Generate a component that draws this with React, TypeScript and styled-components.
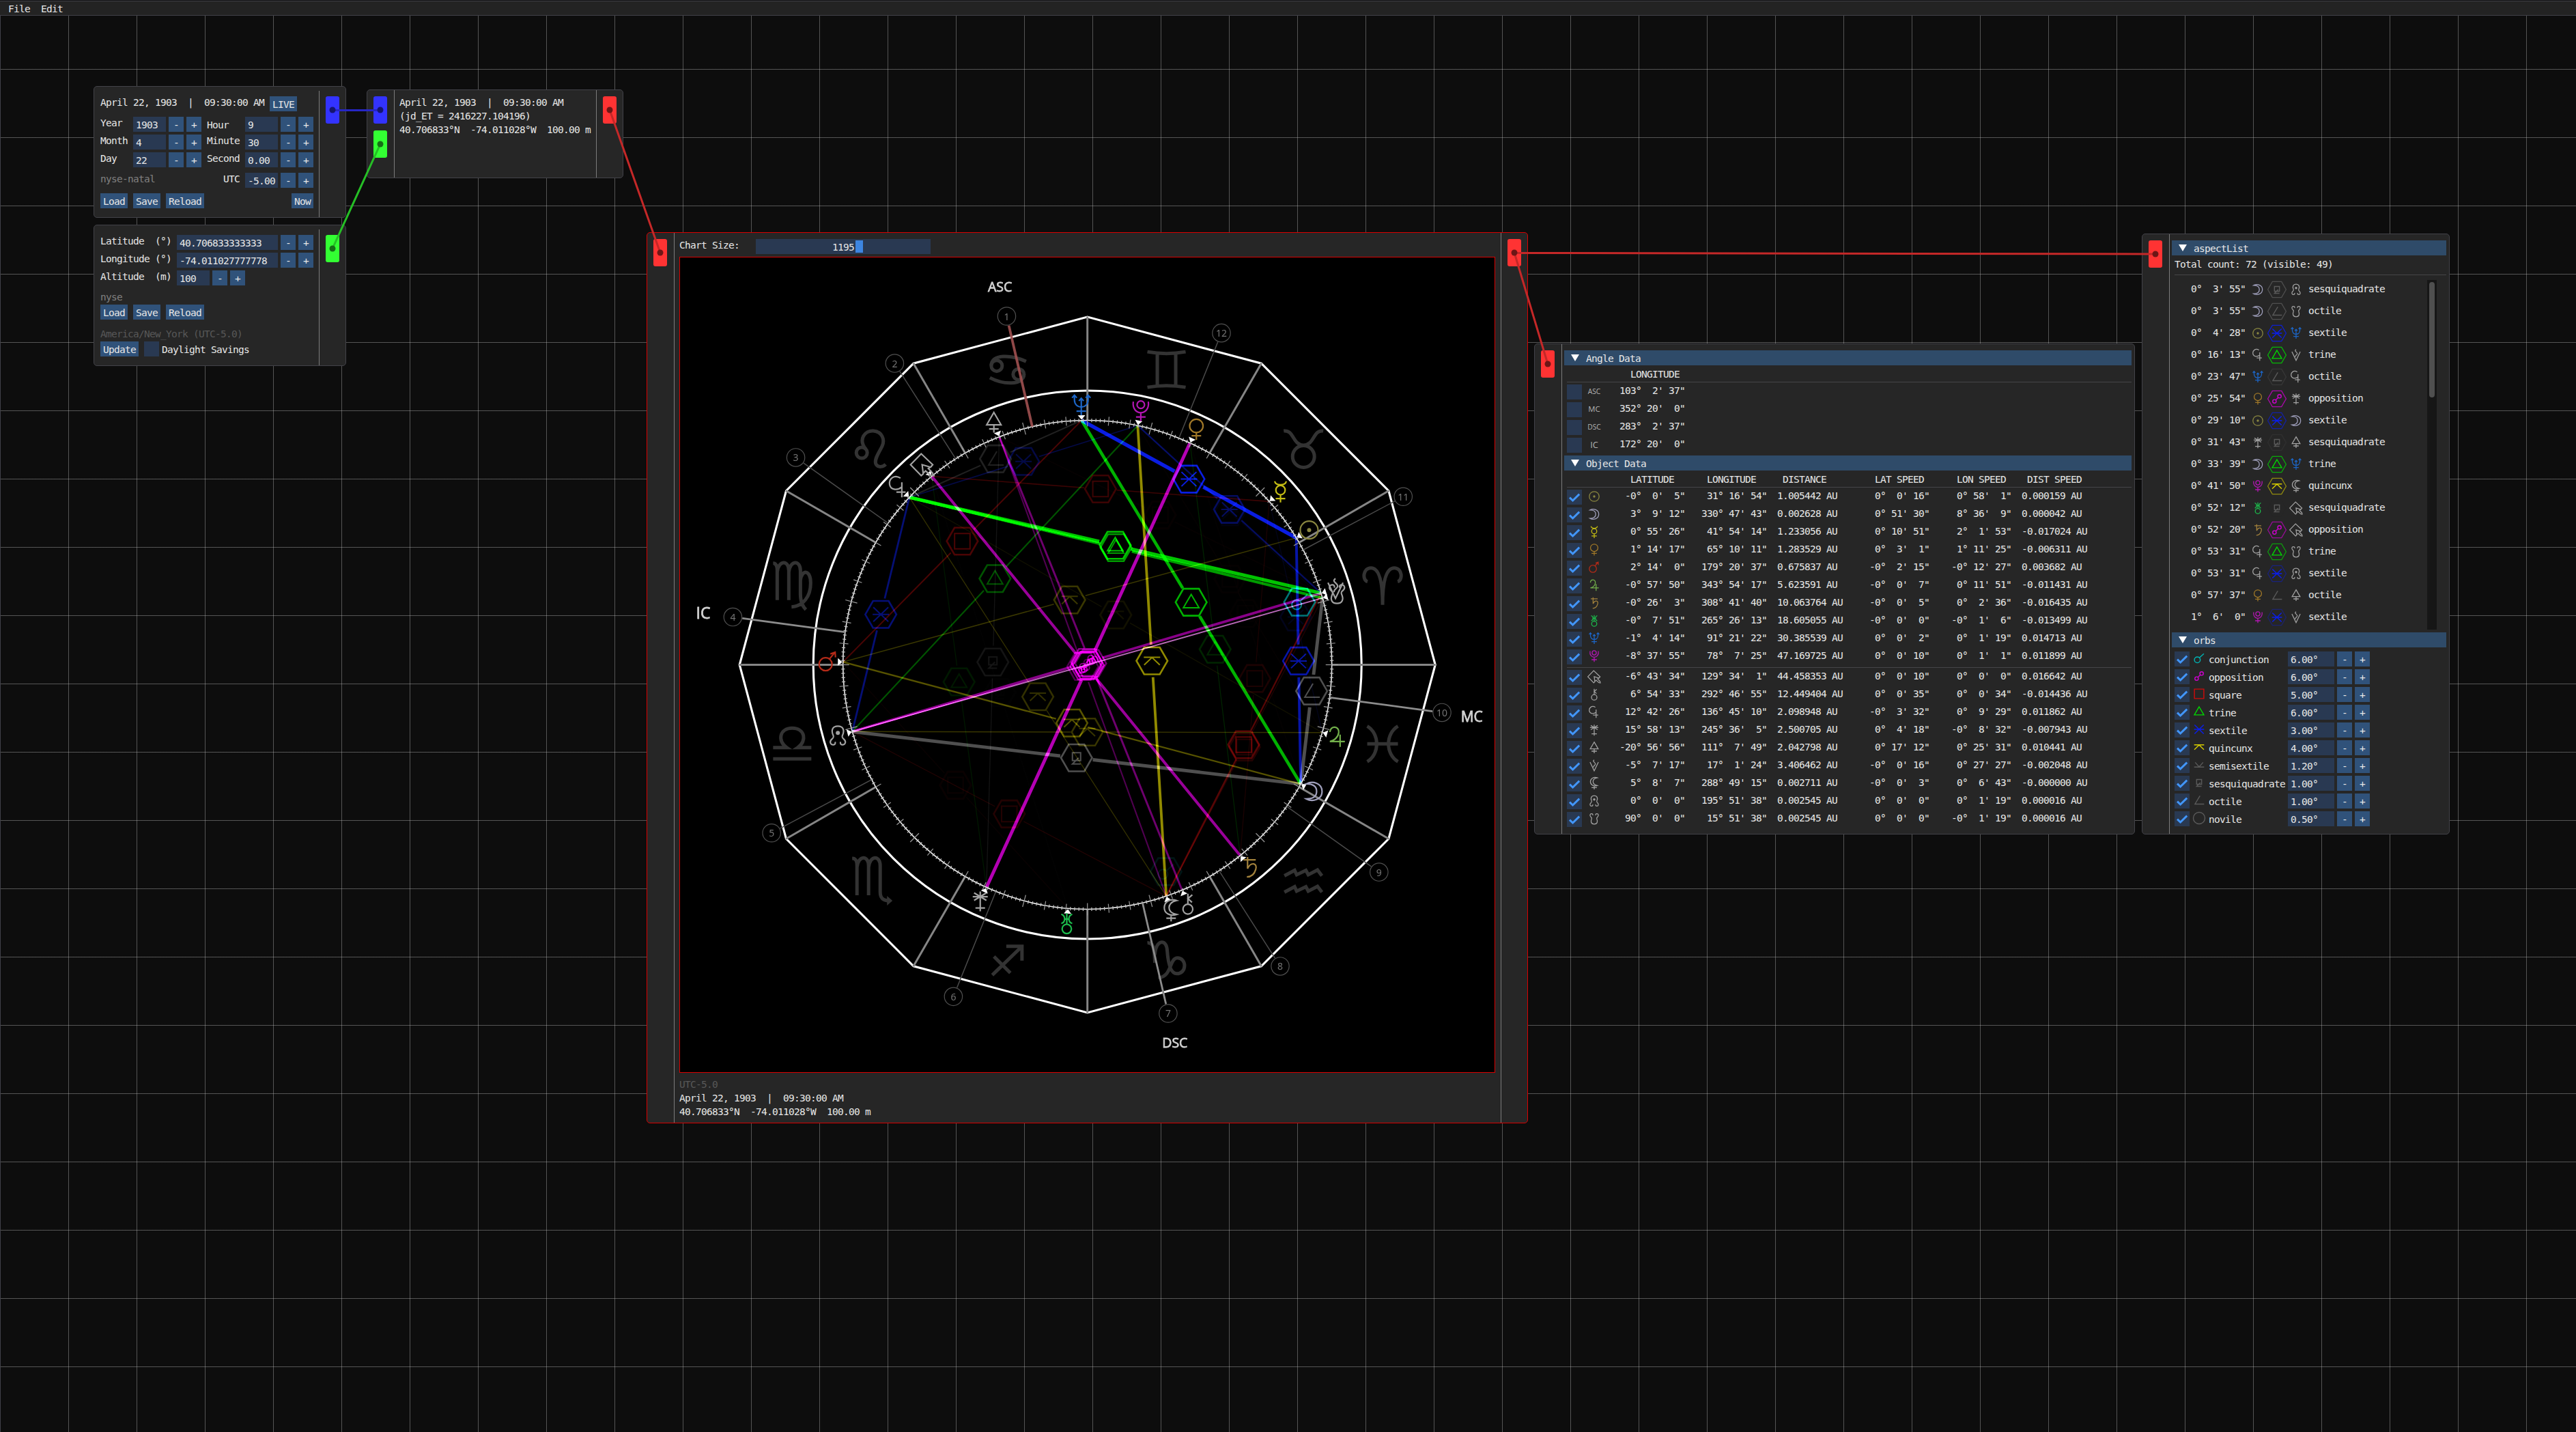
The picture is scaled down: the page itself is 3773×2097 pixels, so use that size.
import React from "react";
import styled, { createGlobalStyle } from "styled-components";

const GlobalStyle = createGlobalStyle`
  html, body { margin: 0; padding: 0; background: #0d0d0d; }
  * { box-sizing: border-box; }
`;

const MONO = '"DejaVu Sans Mono", "Liberation Mono", monospace';

/* ---------- window ---------- */

const Screen = styled.div`
  width: 3773px;
  height: 2097px;
  display: flex;
  flex-direction: column;
  padding-top: 1px;
  overflow: hidden;
  background: #0d0d0d;
  color: #e6e6e6;
  font-family: ${MONO};
  font-size: 14.5px;
  letter-spacing: -0.73px;
  line-height: 18px;
  white-space: pre;
`;

const MenuBar = styled.div`
  height: 22px;
  flex: none;
  display: flex;
  gap: 16px;
  padding: 2px 12px;
  background: #232323;
  border-top: 1px solid #404048;
  border-bottom: 1px solid #404048;
`;

const Canvas = styled.div`
  position: relative;
  flex: 1;
  margin-top: -22px;
  padding-top: 22px;
  border-left: 1px solid #404048;
  background-image:
    linear-gradient(to right, rgba(200, 200, 200, 0.38) 1px, transparent 1px),
    linear-gradient(to bottom, rgba(200, 200, 200, 0.38) 1px, transparent 1px);
  background-size: 100px 100px;
  background-origin: border-box;
  z-index: 0;
`;

const MenuLayer = styled.div`
  position: relative;
  z-index: 1;
`;

/* ---------- node frame ---------- */

const Node = styled.section<{ x: number; y: number; w: number; h: number; edge?: string }>`
  position: absolute;
  left: ${(p) => p.x - 1}px;
  top: ${(p) => p.y - 1}px;
  width: ${(p) => p.w}px;
  height: ${(p) => p.h}px;
  display: flex;
  background: #262626;
  border: 1px solid ${(p) => p.edge || "#424248"};
  border-radius: 5px;
`;

const PinColumn = styled.div<{ side: "in" | "out"; drop?: number }>`
  flex: none;
  width: 39px;
  display: flex;
  flex-direction: column;
  gap: 10px;
  margin-top: ${(p) => p.drop || 0}px;
  padding: ${(p) => (p.drop ? 14 - p.drop : 9)}px 0 0 9px;
  ${(p) => (p.side === "out" ? "border-left: 1px solid #7c7c7c;" : "")}
`;

const Pin = styled.span<{ c: string }>`
  width: 20px;
  height: 40px;
  border-radius: 3px;
  background: ${(p) => p.c};
`;

const Body = styled.div<{ pad: string; line?: boolean }>`
  flex: 1;
  min-width: 0;
  display: flex;
  flex-direction: column;
  gap: 4px;
  padding: ${(p) => p.pad};
  ${(p) => (p.line ? "border-left: 1px solid #7c7c7c;" : "")}
`;

/* ---------- widgets ---------- */

const Text = styled.span<{ c?: string; w?: number; down?: boolean; indent?: number }>`
  display: block;
  flex: none;
  height: 16px;
  ${(p) => (p.w ? `width: ${p.w}px;` : "")}
  ${(p) => (p.c ? `color: ${p.c};` : "")}
  ${(p) => (p.down ? "margin-top: 3px;" : "")}
  ${(p) => (p.indent ? `margin-left: ${p.indent}px;` : "")}
`;

const Row = styled.div<{ gap?: number; mt?: number }>`
  display: flex;
  flex: none;
  align-items: flex-start;
  gap: ${(p) => p.gap ?? 4}px;
  margin-top: ${(p) => p.mt || 0}px;
`;

const Button = styled.button<{ w?: number }>`
  all: unset;
  box-sizing: border-box;
  flex: none;
  height: 22px;
  padding: 3px 4px 1px;
  text-align: center;
  background: #30527a;
  ${(p) => (p.w ? `width: ${p.w}px;` : "")}
`;

const Field = styled.div<{ w: number }>`
  flex: none;
  height: 22px;
  width: ${(p) => p.w}px;
  padding: 3px 4px 1px;
  background: #293952;
`;

const Spacer = styled.span<{ w: number }>`
  flex: none;
  width: ${(p) => p.w}px;
`;

const CheckBox = styled.span`
  display: block;
  flex: none;
  width: 22px;
  height: 22px;
  background: #293952;
`;

function Check({ on }: { on?: boolean }) {
  return (
    <CheckBox>
      {on && (
        <svg width="22" height="22" display="block">
          <path d="M4 11.6 L8.6 16 L18.2 6.6" fill="none" stroke="#4296fa" strokeWidth="3" />
        </svg>
      )}
    </CheckBox>
  );
}

function Stepper({ value, w = 48 }: { value: string; w?: number }) {
  return (
    <Row>
      <Field w={w}>{value}</Field>
      <Button w={22}>-</Button>
      <Button w={22}>+</Button>
    </Row>
  );
}

const HeaderBar = styled.div`
  flex: none;
  height: 22px;
  display: flex;
  gap: 10px;
  padding: 3px 0 0 10px;
  background: #2f4b69;
`;

const Arrow = styled.i`
  width: 0;
  height: 0;
  margin-top: 3px;
  border: 6px solid transparent;
  border-top: 10px solid #fff;
  border-bottom: 0;
`;

const Rule = styled.hr<{ mt?: number }>`
  flex: none;
  width: auto;
  height: 1px;
  margin: ${(p) => p.mt || 0}px 0 -1px 4px;
  border: 0;
  background: #454548;
`;

function Header({ title }: { title: string }) {
  return (
    <HeaderBar>
      <Arrow />
      <Text>{title}</Text>
    </HeaderBar>
  );
}

/* ---------- astrological glyphs ---------- */

type Glyph = { c: string; d: string; dot?: [number, number, number]; rings?: [number, number, number][] };

const GREY = "#a2a2a2";
const GLYPHS: Record<string, Glyph> = {
  sun: { c: "#8a8740", d: "", dot: [0, 0, 3], rings: [[0, 0, 13]] },
  moon: { c: "#a0a0bd", d: "M-11 -11 C-2 -16 12 -12 12 0 C12 12 -2 16 -11 11 C2 11 4 5 4 0 C4 -5 2 -11 -11 -11Z" },
  mercury: { c: "#c4bc14", d: "M-8.5 -15 C-7 -8 7 -8 8.5 -15 M0 5 V16 M-7 10.5 H7", rings: [[0, -2, 6.8]] },
  venus: { c: "#a07828", d: "M0 5 V15.5 M-7 9.5 H7", rings: [[0, -5, 9.8]] },
  mars: { c: "#b42a18", d: "M2.5 -4.5 L9.5 -13 M3.5 -11.5 L10.5 -14 L11 -6.5", rings: [[-3.5, 3.5, 9.5]] },
  jupiter: { c: "#72b04a", d: "M-10 -7 C-9 -17 4 -16 3 -6 C2 1 -4 6 -10 7 H12 M5 -3 V15" },
  saturn: { c: "#a3823c", d: "M-9 -11 H9 M-3 -15 V2 C2 -9 12 -6 9 3 C7 10 2 14 -4 14" },
  uranus: { c: "#1cbc4c", d: "M-8 -13.5 C-1.5 -11 -1.5 -2 -8 0 M8 -13.5 C1.5 -11 1.5 -2 8 0 M0 -15 V1 M-3.5 -6.5 H3.5", rings: [[0, 8, 6.8]] },
  neptune: { c: "#1c66c8", d: "M-10 -14 V-8 C-10 6 10 6 10 -8 V-14 M0 -10 V14.5 M-7 8.5 H7 M-13.5 -11 L-10 -15 L-6.5 -11 M6.5 -11 L10 -15 L13.5 -11 M-3.5 -6.5 L0 -10.5 L3.5 -6.5" },
  pluto: { c: "#b416b4", d: "M-11 -13.5 C-14 8 14 8 11 -13.5 M0 2.5 V15 M-7 9 H7", rings: [[0, -9, 5.5]] },
  sedna: { c: GREY, d: "M2 13 L-1.4 16 L-17 0 L-1.4 -16 L15.5 0 L12 4 M0 0 L1.5 12.5 L5 9 L12.5 15.5 L16 16 L15.5 12.5 L9 5.5 L12 3.5 Z" },
  chiron: { c: GREY, d: "M0 -15 V0 M6.5 -13.5 L0 -8 L6 -2.5", rings: [[0, 7.5, 7.2]] },
  ceres: { c: GREY, d: "M3 -13 C-6 -19 -14 -12 -13 -4 C-12 4 -2 6 5 0 M5 -7 V15 M-3 7.5 H10.5" },
  juno: { c: GREY, d: "M0 -14 V15 M-11 -6.5 H11 M-9 -12 L9 -1 M-9 -1 L9 -12 M-7 10 H7" },
  pallas: { c: GREY, d: "M0 -15 L10.5 3 H-10.5 Z M0 3 V14.5 M-7 9 H7" },
  vesta: { c: GREY, d: "M-11 -9 L0 14 L11 -9 M0 -15 C-7 -10 5 -8 3 -3 C1 1 -3 1 -2 5" },
  lilith: { c: GREY, d: "M8 -14.5 C-2 -18 -10 -12 -10 -4 C-10 4 -2 9 8 6 C-1 4 -3 -1 -3 -4 C-3 -8 0 -13 8 -14.5 Z M0 8 V16 M-7 11.5 H7" },
  nnode: { c: GREY, d: "M-4 9 C-2 14 -10 15 -11 10 C-12 4 -4 5 -7 -1 C-10 -8 -8 -14 0 -14 C8 -14 10 -8 7 -1 C4 5 12 4 11 10 C10 15 2 14 4 9", dot: [0, -4, 3] },
  snode: { c: GREY, d: "M-4 -9 C-2 -14 -10 -15 -11 -10 C-12 -4 -4 -5 -7 1 C-10 8 -8 14 0 14 C8 14 10 8 7 1 C4 -5 12 -4 11 -10 C10 -15 2 -14 4 -9" },
};

const ASPECTS: Record<string, { angle: number; orb: number; c: string; d: string; rings?: [number, number, number][] }> = {
  conjunction: { angle: 0, orb: 6, c: "#00b4b4", d: "M0.6 -1.2 L11.4 -11", rings: [[-4.3, 3.8, 7]] },
  opposition: { angle: 180, orb: 6, c: "#d200d2", d: "M-3 3 L3 -3", rings: [[-6, 6, 4.2], [6, -6, 4.2]] },
  square: { angle: 90, orb: 5, c: "#d20a0a", d: "M-11.3 -11.3 H11.3 V11.3 H-11.3 Z" },
  trine: { angle: 120, orb: 6, c: "#00d800", d: "M0 -11.5 L11.4 8 H-11.4 Z" },
  sextile: { angle: 60, orb: 3, c: "#0a1eee", d: "M-12 0 H12 M-11 -10.5 L11 10.5 M-11 10.5 L11 -10.5" },
  quincunx: { angle: 150, orb: 4, c: "#d6cc00", d: "M-12 -5.3 H12 M-11.5 6 L0 -5 L11.5 6" },
  semisextile: { angle: 30, orb: 1.2, c: "#5a5a5a", d: "M-12 5.3 H12 M-9.5 -6 L0 5 L9.5 -6" },
  sesquiquadrate: { angle: 135, orb: 1, c: "#5a5a5a", d: "M-6 -7.5 H6 V4 H-6 Z M3 0 L-6 9 H6" },
  octile: { angle: 45, orb: 1, c: "#5a5a5a", d: "M2 -11 L-10 9 H12" },
  novile: { angle: 40, orb: 0.5, c: "#5a5a5a", d: "", rings: [[0, 0, 14]] },
};

function Strokes({ g, w }: { g: { c: string; d: string; dot?: [number, number, number]; rings?: [number, number, number][] }; w: number }) {
  return (
    <g fill="none" stroke={g.c} strokeWidth={w}>
      {g.d && <path d={g.d} />}
      {g.rings?.map((r, i) => <circle key={i} cx={r[0]} cy={r[1]} r={r[2]} />)}
      {g.dot && <circle cx={g.dot[0]} cy={g.dot[1]} r={g.dot[2]} fill={g.c} stroke="none" />}
    </g>
  );
}

const HEX = "-1,0 -0.5,-0.866 0.5,-0.866 1,0 0.5,0.866 -0.5,0.866"
  .split(" ")
  .map((p) => p.split(",").map(Number));
const hexPoints = (r: number) => HEX.map(([x, y]) => `${x * r},${y * r}`).join(" ");

const IconBox = styled.span<{ w: number; h: number }>`
  display: flex;
  flex: none;
  align-items: center;
  justify-content: center;
  width: ${(p) => p.w}px;
  height: ${(p) => p.h}px;
`;

function PlanetIcon({ id }: { id: string }) {
  return (
    <svg width="20" height="20" viewBox="-18 -18 36 36">
      <Strokes g={GLYPHS[id]} w={2.3} />
    </svg>
  );
}

function AspectIcon({ id, hex }: { id: string; hex?: number }) {
  const a = ASPECTS[id];
  return (
    <svg width="28" height="28" viewBox="-14 -14 28 28">
      {hex !== undefined && (
        <polygon points={hexPoints(13.4)} fill="none" stroke={a.c} strokeOpacity={hex} strokeWidth="1.3" />
      )}
      <g transform="scale(0.61)">
        <Strokes g={a} w={2.3} />
      </g>
    </svg>
  );
}

/* ---------- chart ---------- */

const OBJECTS: [string, string, string, string, string, string, string][] = [
  ["sun", `-0°  0'  5"`, ` 31° 16' 54"`, "1.005442 AU", ` 0°  0' 16"`, ` 0° 58'  1"`, "0.000159 AU"],
  ["moon", ` 3°  9' 12"`, `330° 47' 43"`, "0.002628 AU", ` 0° 51' 30"`, ` 8° 36'  9"`, "0.000042 AU"],
  ["mercury", ` 0° 55' 26"`, ` 41° 54' 14"`, "1.233056 AU", ` 0° 10' 51"`, ` 2°  1' 53"`, "-0.017024 AU"],
  ["venus", ` 1° 14' 17"`, ` 65° 10' 11"`, "1.283529 AU", ` 0°  3'  1"`, ` 1° 11' 25"`, "-0.006311 AU"],
  ["mars", ` 2° 14'  0"`, `179° 20' 37"`, "0.675837 AU", `-0°  2' 15"`, `-0° 12' 27"`, "0.003682 AU"],
  ["jupiter", `-0° 57' 50"`, `343° 54' 17"`, "5.623591 AU", `-0°  0'  7"`, ` 0° 11' 51"`, "-0.011431 AU"],
  ["saturn", `-0° 26'  3"`, `308° 41' 40"`, "10.063764 AU", `-0°  0'  5"`, ` 0°  2' 36"`, "-0.016435 AU"],
  ["uranus", `-0°  7' 51"`, `265° 26' 13"`, "18.605055 AU", `-0°  0'  0"`, `-0°  1'  6"`, "-0.013499 AU"],
  ["neptune", `-1°  4' 14"`, ` 91° 21' 22"`, "30.385539 AU", ` 0°  0'  2"`, ` 0°  1' 19"`, "0.014713 AU"],
  ["pluto", `-8° 37' 55"`, ` 78°  7' 25"`, "47.169725 AU", ` 0°  0' 10"`, ` 0°  1'  1"`, "0.011899 AU"],
  ["sedna", `-6° 43' 34"`, `129° 34'  1"`, "44.458353 AU", ` 0°  0' 10"`, ` 0°  0'  0"`, "0.016642 AU"],
  ["chiron", ` 6° 54' 33"`, `292° 46' 55"`, "12.449404 AU", ` 0°  0' 35"`, ` 0°  0' 34"`, "-0.014436 AU"],
  ["ceres", `12° 42' 26"`, `136° 45' 10"`, "2.098948 AU", `-0°  3' 32"`, ` 0°  9' 29"`, "0.011862 AU"],
  ["juno", `15° 58' 13"`, `245° 36'  5"`, "2.500705 AU", ` 0°  4' 18"`, `-0°  8' 32"`, "-0.007943 AU"],
  ["pallas", `-20° 56' 56"`, `111°  7' 49"`, "2.042798 AU", ` 0° 17' 12"`, ` 0° 25' 31"`, "0.010441 AU"],
  ["vesta", `-5°  7' 17"`, ` 17°  1' 24"`, "3.406462 AU", `-0°  0' 16"`, ` 0° 27' 27"`, "-0.002048 AU"],
  ["lilith", ` 5°  8'  7"`, `288° 49' 15"`, "0.002711 AU", `-0°  0'  3"`, ` 0°  6' 43"`, "-0.000000 AU"],
  ["nnode", ` 0°  0'  0"`, `195° 51' 38"`, "0.002545 AU", ` 0°  0'  0"`, ` 0°  1' 19"`, "0.000016 AU"],
  ["snode", `90°  0'  0"`, ` 15° 51' 38"`, "0.002545 AU", ` 0°  0'  0"`, `-0°  1' 19"`, "0.000016 AU"],
];

const degrees = (s: string) => {
  const [d, m, sec] = (s.match(/\d+/g) || []).map(Number);
  return d + m / 60 + sec / 3600;
};

const BODIES = OBJECTS.map((o) => ({ id: o[0], lon: degrees(o[2]) }));

const CX = 597.7;
const CY = 597.5;
const at = (deg: number, r: number): [number, number] => [
  CX + r * Math.cos((deg * Math.PI) / 180),
  CY - r * Math.sin((deg * Math.PI) / 180),
];

const ray = (deg: number, a: number, b: number) => {
  const [x1, y1] = at(deg, a);
  const [x2, y2] = at(deg, b);
  return { x1, y1, x2, y2 };
};

const ZODIAC: { d: string; rings?: [number, number, number][]; fill?: string }[] = [
  { d: "M-22 -6 C-30 -8 -29 -26 -17 -26 C-5 -26 0 -6 0 28 C0 -6 5 -26 17 -26 C29 -26 30 -8 22 -6" },
  { d: "M-29 -26 C-14 -28 -16 -5 0 -5 C16 -5 14 -28 29 -26", rings: [[0, 11.5, 16]] },
  { d: "M-28 -26 Q0 -21 28 -26 M-28 26 Q0 21 28 26 M-13.5 -23 V23 M13.5 -23 V23" },
  { d: "M-25 -6 C-24 -23 4 -22 26 -12 M23 7 C22 24 -8 22 -27 12", rings: [[-17, -5.5, 8], [15, 7, 8]] },
  { d: "M-8 1 C-20 -14 -9 -27 3 -26 C16 -25 20 -13 16 -4 C12 5 3 16 7 23 C10 28 17 27 21 23", rings: [[-14, 6, 8]] },
  { d: "M-28 -33 C-23 -33 -22 -28 -22 -22 V21 M-22 -20 C-20 -38 -5 -38 -5 -22 V21 M-5 -20 C-3 -38 12 -38 12 -22 V12 C12 24 15 30 20 35 M12 -8 C14 -24 27 -24 27 -4 C27 16 16 30 -1 31" },
  { d: "M-28 5.5 H-8 C-22 -4 -19 -23 0 -23 C19 -23 22 -4 8 5.5 H28 M-28 22 H28" },
  { d: "M-28 -33 C-22 -33 -21 -28 -21 -22 V21 M-21 -20 C-19 -38 -4 -38 -4 -22 V21 M-4 -20 C-2 -38 13 -38 13 -22 V16 C13 25 17 29 26 29", fill: "M23 22 L31 29 L23 36 Z" },
  { d: "M-3 -20 H20 V1 M20 -20 L-23.5 22 M-21 -5 L3 19" },
  { d: "M-28 -25 C-20 -26 -18 -20 -17 4 M-17 -8 C-16 -30 0 -32 1 -14 C2 0 5 20 15 20 C30 20 30 -3 16 -3 C4 -3 8 25 -12 26" },
  { d: "M-28 -7.5 L-13 -15.5 L-10 -9 L3.5 -15.5 L7 -9 L20.5 -16 L27 -7.5 M-28 16.5 L-13 8.5 L-10 15 L3.5 8.5 L7 15 L20.5 8 L27 16.5" },
  { d: "M-22.5 -26 C-4 -15 -4 15 -22.5 26 M22.5 -26 C4 -15 4 15 22.5 26 M-22.5 0 H22.5" },
];

const HOUSES = [103.04, 122.6, 144.6, 172.33, 208.03, 248, 283.04, 302.6, 324.6, 352.33, 28.03, 68];

const RING = 358;

function findAspects() {
  const found: { key: string; kind: string; a: number; b: number; s: number; exact: boolean }[] = [];
  for (let i = 0; i < BODIES.length; i++)
    for (let j = i + 1; j < BODIES.length; j++) {
      let sep = Math.abs(BODIES[i].lon - BODIES[j].lon);
      if (sep > 180) sep = 360 - sep;
      for (const kind of Object.keys(ASPECTS)) {
        const orb = Math.abs(sep - ASPECTS[kind].angle);
        const s = 1 - orb / ASPECTS[kind].orb;
        if (s > 0) found.push({ key: `${i}-${j}-${kind}`, kind, a: BODIES[i].lon, b: BODIES[j].lon, s, exact: orb < 0.001 });
      }
    }
  return found;
}

function AspectLine({ kind, a, b, s, exact }: { kind: string; a: number; b: number; s: number; exact: boolean }) {
  const spec = ASPECTS[kind];
  const [x1, y1] = at(a, RING);
  const [x2, y2] = at(b, RING);
  let mx = (x1 + x2) / 2;
  let my = (y1 + y2) / 2;
  const power = s * s;
  if (exact) {
    return <line x1={x1} y1={y1} x2={x2} y2={y2} stroke="#b868b8" strokeWidth="2" style={{ mixBlendMode: "plus-lighter" }} />;
  }
  const joined = kind !== "conjunction";
  if (!joined) {
    const k = (RING - 34) / Math.hypot(mx - CX, my - CY);
    mx = CX + (mx - CX) * k;
    my = CY + (my - CY) * k;
  }
  const len = Math.hypot(x2 - x1, y2 - y1) / 2;
  const cut = len > 24 ? (len - 24) / len : 0;
  return (
    <g opacity={power} stroke={spec.c} style={{ mixBlendMode: "plus-lighter" }}>
      {joined && (
        <path
          d={`M${x1} ${y1} L${x1 + (mx - x1) * cut} ${y1 + (my - y1) * cut} M${x2} ${y2} L${x2 + (mx - x2) * cut} ${y2 + (my - y2) * cut}`}
          strokeWidth={Math.max(1.2, 5.6 * power)}
        />
      )}
      <g transform={`translate(${mx} ${my})`}>
        <polygon points={hexPoints(22.8)} fill="none" strokeWidth="2.6" />
        <Strokes g={spec} w={2} />
      </g>
    </g>
  );
}

const ChartFrame = styled.div`
  flex: none;
  width: 1195px;
  height: 1195px;
  background: #000;
  outline: 1px solid #d80000;
  outline-offset: -1px;
`;

function Chart() {
  return (
    <ChartFrame>
      <svg width="1195" height="1195" viewBox="0 0 1195 1195" display="block" style={{ isolation: "isolate", letterSpacing: 0 }}>
        {ZODIAC.map((z, i) => {
          const [x, y] = at(15 + i * 30, 447.6);
          return (
            <g key={i} transform={`translate(${x} ${y})`} fill="none" stroke="#333" strokeWidth="5">
              <path d={z.d} />
              {z.rings?.map((r, k) => <circle key={k} cx={r[0]} cy={r[1]} r={r[2]} />)}
              {z.fill && <path d={z.fill} fill="#333" stroke="none" />}
            </g>
          );
        })}

        <polygon
          points={Array.from({ length: 12 }, (_, i) => at(i * 30, 509.5).join(",")).join(" ")}
          fill="none"
          stroke="#fff"
          strokeWidth="3.1"
        />
        <circle cx={CX} cy={CY} r={401.5} fill="none" stroke="#fff" strokeWidth="3.1" />
        {Array.from({ length: 12 }, (_, i) => (
          <line key={i} {...ray(i * 30, RING, 510)} stroke="#858585" strokeWidth="3" />
        ))}

        {findAspects().map(({ key, ...a }) => <AspectLine key={key} {...a} />)}

        <circle cx={CX} cy={CY} r={RING} fill="none" stroke="#ececec" strokeWidth="1.6" />
        {Array.from({ length: 360 }, (_, i) => {
          const t = i % 15 === 0 ? 9 : i % 5 === 0 ? 6.5 : 2.6;
          return <line key={i} {...ray(i, RING - t, RING + t)} stroke={i % 5 ? "#c4c4c4" : "#9a9a9a"} strokeWidth="1.2" />;
        })}

        {HOUSES.map((h, i) => {
          const [x, y] = at(h, 524);
          const main = i % 3 === 0;
          return (
            <g key={i}>
              <line {...ray(h, RING, 510)} stroke={i === 0 ? "#a05050" : main ? "#8c8c8c" : "#4a4a4a"} strokeOpacity={i === 0 ? 0.9 : 1} strokeWidth={i === 0 ? 3.8 : main ? 2.8 : 1.5} />
              <circle cx={x} cy={y} r={13.2} fill="#000" stroke="#505050" strokeWidth="1.2" />
              <text x={x} y={y + 5.5} textAnchor="middle" fontFamily='"Noto Sans", sans-serif' fontSize="14" fill="#747474">
                {i + 1}
              </text>
            </g>
          );
        })}

        {BODIES.map((b) => {
          const [x, y] = at(b.lon, 380);
          const [tx, ty] = at(b.lon, 359);
          return (
            <g key={b.id}>
              <path d="M0 0 L-5.5 -6.5 H5.5 Z" fill="#fff" transform={`translate(${tx} ${ty}) rotate(${90 - b.lon})`} />
              <g transform={`translate(${x} ${y})`}>
                <Strokes g={GLYPHS[b.id]} w={2.2} />
              </g>
            </g>
          );
        })}

        <g fontFamily='"Open Sans", "Noto Sans", sans-serif' fill="#d2d2d2" stroke="#d2d2d2" strokeWidth="0.8" textAnchor="middle">
          <text x="469.6" y="50.8" fontSize="19.5">ASC</text>
          <text x="35" y="529.5" fontSize="23">IC</text>
          <text x="1160.7" y="680.8" fontSize="21">MC</text>
          <text x="725.8" y="1158.4" fontSize="19.5">DSC</text>
        </g>
      </svg>
    </ChartFrame>
  );
}

/* ---------- tables ---------- */

const DataGrid = styled.div`
  display: grid;
  flex: none;
  grid-template-columns: 22px 55px 120px 111px 135px 120px 103px 100px;
  padding-left: 4px;
`;

const AngleTag = styled.span<{ size: number }>`
  font-family: "Open Sans", "Noto Sans", sans-serif;
  font-size: ${(p) => p.size}px;
  font-weight: 500;
  letter-spacing: 0;
  color: #b4b4b4;
`;

function DataRow({ row }: { row: (typeof OBJECTS)[number] }) {
  return (
    <DataGrid>
      <Check on />
      <IconBox w={36} h={20}>
        <PlanetIcon id={row[0]} />
      </IconBox>
      <Text>{row[1].length === 12 ? row[1] : " " + row[1]}</Text>
      <Text>{row[2]}</Text>
      <Text>{row[3]}</Text>
      <Text>{row[4]}</Text>
      <Text>{row[5]}</Text>
      <Text>{row[6]}</Text>
    </DataGrid>
  );
}

const ANGLES: [string, string, number][] = [
  ["ASC", `103°  2' 37"`, 10.3],
  ["MC", `352° 20'  0"`, 11.3],
  ["DSC", `283°  2' 37"`, 10.3],
  ["IC", `172° 20'  0"`, 12.8],
];

const LIST: [string, string, string, string][] = [
  [`0°  3' 55"`, "moon", "sesquiquadrate", "nnode"],
  [`0°  3' 55"`, "moon", "octile", "snode"],
  [`0°  4' 28"`, "sun", "sextile", "neptune"],
  [`0° 16' 13"`, "ceres", "trine", "vesta"],
  [`0° 23' 47"`, "neptune", "octile", "ceres"],
  [`0° 25' 54"`, "venus", "opposition", "juno"],
  [`0° 29' 10"`, "sun", "sextile", "moon"],
  [`0° 31' 43"`, "juno", "sesquiquadrate", "pallas"],
  [`0° 33' 39"`, "moon", "trine", "neptune"],
  [`0° 41' 50"`, "pluto", "quincunx", "lilith"],
  [`0° 52' 12"`, "uranus", "sesquiquadrate", "sedna"],
  [`0° 52' 20"`, "saturn", "opposition", "sedna"],
  [`0° 53' 31"`, "ceres", "trine", "snode"],
  [`0° 53' 31"`, "ceres", "sextile", "nnode"],
  [`0° 57' 37"`, "venus", "octile", "pallas"],
  [`1°  6'  0"`, "pluto", "sextile", "vesta"],
];

const ListBox = styled.div`
  flex: none;
  display: flex;
  justify-content: space-between;
  height: 512px;
  margin: 4px 14px 0 4px;
  overflow: hidden;
`;

const ListRow = styled.div`
  display: flex;
  height: 32px;
  padding-left: 24px;
`;

const ListText = styled(Text)`
  margin: 4px 4px 0 0;
`;

const NameText = styled(Text)`
  margin: 4px 0 0 4px;
`;

const ScrollTrack = styled.div`
  width: 14px;
  padding: 3px;
  background: #161616;
`;

const ScrollThumb = styled.div`
  height: 169px;
  border-radius: 4px;
  background: #4f4f4f;
`;

const Slider = styled.div`
  position: relative;
  width: 256px;
  height: 22px;
  padding-top: 3px;
  text-align: center;
  background: #293952;
`;

const SliderGrab = styled.span`
  position: absolute;
  left: 146px;
  top: 2px;
  width: 11px;
  height: 18px;
  background: #3d85e0;
`;

const WireLayer = styled.svg`
  position: absolute;
  left: -1px;
  top: -1px;
  pointer-events: none;
`;

const WIRES: [number, number, number, number, string][] = [
  [487, 161.5, 557, 161.5, "#2626c4"],
  [487, 364, 557, 211, "#26bf26"],
  [893, 161, 967, 370, "#c42828"],
  [2218, 370.5, 3157, 372, "#c42828"],
  [2218, 370, 2267, 533, "#c42828"],
];

const DOTS: [number, number, string][] = [
  [487, 161, "#16166e"],
  [557, 161, "#16166e"],
  [557, 211, "#166e16"],
  [487, 364, "#166e16"],
  [893, 161, "#6e1616"],
  [967, 370, "#6e1616"],
  [2218, 370, "#6e1616"],
  [2267, 533, "#6e1616"],
  [3157, 372, "#6e1616"],
];

const BLUE = "#3333ff";
const GREEN = "#33ff33";
const RED = "#ff3333";

const ORBS: [string, string][] = [
  ["conjunction", "6.00°"],
  ["opposition", "6.00°"],
  ["square", "5.00°"],
  ["trine", "6.00°"],
  ["sextile", "3.00°"],
  ["quincunx", "4.00°"],
  ["semisextile", "1.20°"],
  ["sesquiquadrate", "1.00°"],
  ["octile", "1.00°"],
  ["novile", "0.50°"],
];

/* ---------- nodes ---------- */

function TimeNode() {
  return (
    <Node x={137} y={126} w={370} h={193}>
      <Body pad="14px 0 0 9px">
        <Row gap={8}>
          <Text w={240}>April 22, 1903  |  09:30:00 AM</Text>
          <Button>LIVE</Button>
        </Row>
        <Row gap={0} mt={4}>
          <Text w={48}>Year</Text>
          <Stepper value="1903" />
          <Spacer w={8} />
          <Text w={56} down>Hour</Text>
          <Stepper value="9" />
        </Row>
        <Row gap={0}>
          <Text w={48}>Month</Text>
          <Stepper value="4" />
          <Spacer w={8} />
          <Text w={56}>Minute</Text>
          <Stepper value="30" />
        </Row>
        <Row gap={0}>
          <Text w={48}>Day</Text>
          <Stepper value="22" />
          <Spacer w={8} />
          <Text w={56}>Second</Text>
          <Stepper value="0.00" />
        </Row>
        <Row gap={0} mt={4}>
          <Text w={180} c="#808080">nyse-natal</Text>
          <Text w={32}>UTC</Text>
          <Stepper value="-5.00" />
        </Row>
        <Row gap={8} mt={4}>
          <Button w={40}>Load</Button>
          <Button w={40}>Save</Button>
          <Button w={56}>Reload</Button>
          <Spacer w={112} />
          <Button w={32}>Now</Button>
        </Row>
      </Body>
      <PinColumn side="out" drop={6}>
        <Pin c={BLUE} />
      </PinColumn>
    </Node>
  );
}

function PlaceNode() {
  return (
    <Node x={137} y={329} w={370} h={207}>
      <Body pad="14px 0 0 9px">
        <Row gap={0}>
          <Text w={112}>Latitude  (°)</Text>
          <Stepper w={148} value="40.706833333333" />
        </Row>
        <Row gap={0}>
          <Text w={112}>Longitude (°)</Text>
          <Stepper w={148} value="-74.011027777778" />
        </Row>
        <Row gap={0}>
          <Text w={112}>Altitude  (m)</Text>
          <Stepper value="100" />
        </Row>
        <Row mt={4}>
          <Text c="#808080">nyse</Text>
        </Row>
        <Row gap={8}>
          <Button w={40}>Load</Button>
          <Button w={40}>Save</Button>
          <Button w={56}>Reload</Button>
        </Row>
        <Row mt={8}>
          <Text c="#585858">America/New_York (UTC-5.0)</Text>
        </Row>
        <Row gap={8}>
          <Button w={56}>Update</Button>
          <Row>
            <Check />
            <Text down>Daylight Savings</Text>
          </Row>
        </Row>
      </Body>
      <PinColumn side="out" drop={6}>
        <Pin c={GREEN} />
      </PinColumn>
    </Node>
  );
}

function MomentNode() {
  return (
    <Node x={537} y={131} w={376} h={130}>
      <PinColumn side="in">
        <Pin c={BLUE} />
        <Pin c={GREEN} />
      </PinColumn>
      <Body pad="9px 0 0 7px" line>
        <Text>April 22, 1903  |  09:30:00 AM</Text>
        <Text>(jd_ET = 2416227.104196)</Text>
        <Text>40.706833°N  -74.011028°W  100.00 m</Text>
      </Body>
      <PinColumn side="out">
        <Pin c={RED} />
      </PinColumn>
    </Node>
  );
}

function ChartNode() {
  return (
    <Node x={947} y={340} w={1291} h={1305} edge="#d80000">
      <PinColumn side="in">
        <Pin c={RED} />
      </PinColumn>
      <Body pad="9px 0 0 7px" line>
        <Row gap={24}>
          <Text w={88}>Chart Size:</Text>
          <Slider>
            1195
            <SliderGrab />
          </Slider>
        </Row>
        <Chart />
        <Row mt={4}>
          <Text c="#585858">UTC-5.0</Text>
        </Row>
        <Text>April 22, 1903  |  09:30:00 AM</Text>
        <Text>40.706833°N  -74.011028°W  100.00 m</Text>
      </Body>
      <PinColumn side="out">
        <Pin c={RED} />
      </PinColumn>
    </Node>
  );
}

function DataNode() {
  return (
    <Node x={2247} y={503} w={880} h={719}>
      <PinColumn side="in">
        <Pin c={RED} />
      </PinColumn>
      <Body pad="9px 4px 0 3px" line>
        <Header title="Angle Data" />
        <DataGrid>
          <i />
          <i />
          <Text>{"  LONGITUDE"}</Text>
        </DataGrid>
        <Rule />
        {ANGLES.map(([name, value, size]) => (
          <DataGrid key={name}>
            <Check />
            <IconBox w={36} h={20}>
              <AngleTag size={size}>{name}</AngleTag>
            </IconBox>
            <Text>{value}</Text>
          </DataGrid>
        ))}
        <Header title="Object Data" />
        <DataGrid>
          <i />
          <i />
          <Text>{"  LATITUDE"}</Text>
          <Text>{" LONGITUDE"}</Text>
          <Text>{" DISTANCE"}</Text>
          <Text>{" LAT SPEED"}</Text>
          <Text>{" LON SPEED"}</Text>
          <Text>{" DIST SPEED"}</Text>
        </DataGrid>
        <Rule />
        {OBJECTS.slice(0, 10).map((o) => <DataRow key={o[0]} row={o} />)}
        <Rule />
        {OBJECTS.slice(10).map((o) => <DataRow key={o[0]} row={o} />)}
      </Body>
    </Node>
  );
}

const OrbTable = styled.div`
  display: flex;
  flex-direction: column;
  gap: 4px;
  padding: 2px 0 0 4px;
`;

const OrbRow = styled.div`
  display: grid;
  flex: none;
  grid-template-columns: 22px 28px 116px auto;
`;

function AspectNode() {
  return (
    <Node x={3137} y={342} w={451} h={880}>
      <PinColumn side="in">
        <Pin c={RED} />
      </PinColumn>
      <Body pad="9px 4px 0 3px" line>
        <Header title="aspectList" />
        <Text indent={4}>Total count: 72 (visible: 49)</Text>
        <Rule mt={4} />
        <ListBox>
          <div>
            {LIST.map(([orb, a, kind, b], i) => (
              <ListRow key={i}>
                <ListText w={80}>{orb}</ListText>
                <IconBox w={28} h={28}>
                  <PlanetIcon id={a} />
                </IconBox>
                <AspectIcon id={kind} hex={Math.pow(1 - degrees(orb) / ASPECTS[kind].orb, 2) * 0.9} />
                <IconBox w={28} h={28}>
                  <PlanetIcon id={b} />
                </IconBox>
                <NameText>{kind}</NameText>
              </ListRow>
            ))}
          </div>
          <ScrollTrack>
            <ScrollThumb />
          </ScrollTrack>
        </ListBox>
        <Header title="orbs" />
        <OrbTable>
          {ORBS.map(([name, orb]) => (
            <OrbRow key={name}>
              <Check on />
              <IconBox w={28} h={20}>
                <AspectIcon id={name} />
              </IconBox>
              <Text down>{name}</Text>
              <Stepper w={68} value={orb} />
            </OrbRow>
          ))}
        </OrbTable>
      </Body>
    </Node>
  );
}

export default function App() {
  return (
    <Screen>
      <GlobalStyle />
      <MenuLayer>
        <MenuBar>
          <Text w={32}>File</Text>
          <Text w={32}>Edit</Text>
        </MenuBar>
      </MenuLayer>
      <Canvas>
        <TimeNode />
        <PlaceNode />
        <MomentNode />
        <ChartNode />
        <DataNode />
        <AspectNode />
        <WireLayer width="3773" height="2097" viewBox="0 0 3773 2097">
          {WIRES.map(([x1, y1, x2, y2, c], i) => (
            <line key={i} x1={x1} y1={y1} x2={x2} y2={y2} stroke={c} strokeWidth="3" />
          ))}
          {DOTS.map(([x, y, c], i) => (
            <circle key={i} cx={x} cy={y} r="4.5" fill={c} />
          ))}
        </WireLayer>
      </Canvas>
    </Screen>
  );
}
